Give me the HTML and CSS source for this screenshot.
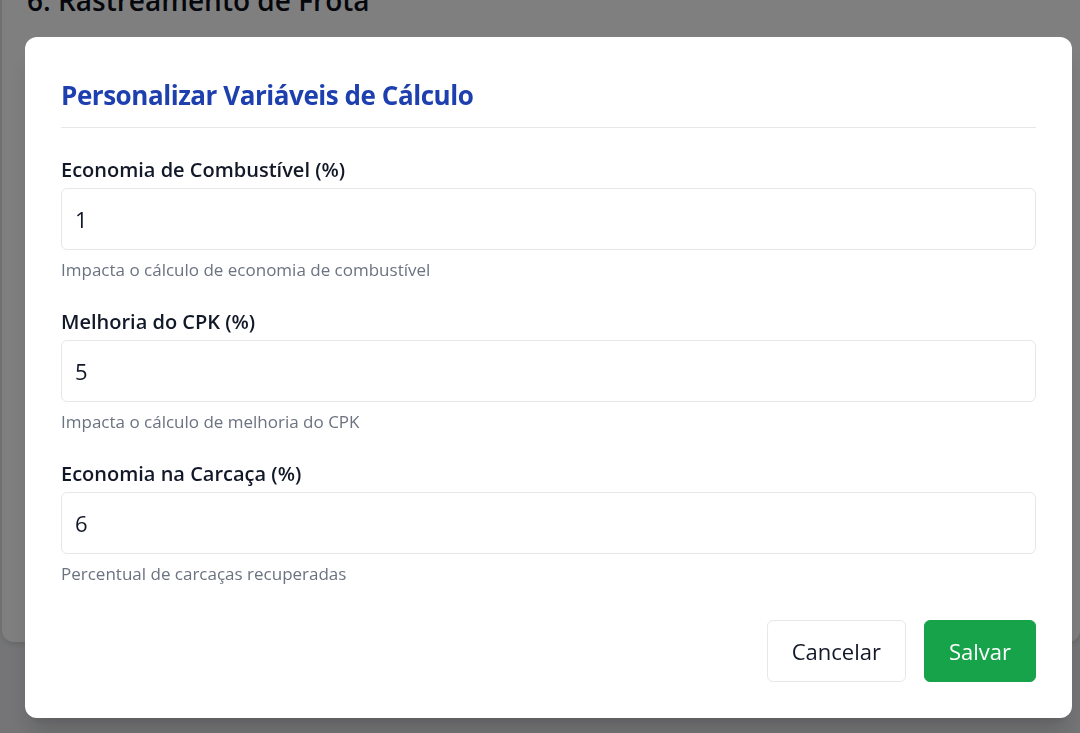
FILE: index.html
```html
<!DOCTYPE html>
<html lang="pt-BR">
<head>
<meta charset="utf-8">
<title>Personalizar Variáveis de Cálculo</title>
<link rel="stylesheet" href="styles.css">
</head>
<body>
<div class="page">
  <section class="card">
    <h2 class="section-title">6. Rastreamento de Frota</h2>
  </section>
</div>
<div class="overlay">
  <div class="modal" role="dialog" aria-labelledby="modal-title">
    <header class="modal-header">
      <h1 id="modal-title" class="modal-title">Personalizar Variáveis de Cálculo</h1>
    </header>
    <div class="field">
      <label class="field-label" for="f1">Economia de Combustível (%)</label>
      <input class="field-input" id="f1" type="text" value="1">
      <p class="field-help">Impacta o cálculo de economia de combustível</p>
    </div>
    <div class="field">
      <label class="field-label" for="f2">Melhoria do CPK (%)</label>
      <input class="field-input" id="f2" type="text" value="5">
      <p class="field-help">Impacta o cálculo de melhoria do CPK</p>
    </div>
    <div class="field">
      <label class="field-label" for="f3">Economia na Carcaça (%)</label>
      <input class="field-input" id="f3" type="text" value="6">
      <p class="field-help">Percentual de carcaças recuperadas</p>
    </div>
    <footer class="modal-footer">
      <button class="btn btn-secondary" type="button">Cancelar</button>
      <button class="btn btn-primary" type="button">Salvar</button>
    </footer>
  </div>
</div>
</body>
</html>
```
FILE: styles.css
```css
* { box-sizing: border-box; }
html, body { margin: 0; padding: 0; }
body {
  width: 1080px;
  height: 733px;
  overflow: hidden;
  background: #eaebee;
  font-family: "Open Sans", "Noto Sans", sans-serif;
  color: #111827;
}
.page {
  padding-left: 2px;
}
.card {
  background: #ffffff;
  height: 662px;
  margin-top: -20px;
  border-radius: 0 0 12px 12px;
  padding: 0 25px;
  box-shadow: 0 2px 6px rgba(0,0,0,0.12);
}
.section-title {
  margin: 0;
  padding-top: 0;
  font-size: 28px;
  line-height: 40px;
  font-weight: 600;
  color: #0b0f19;
}
.overlay {
  position: fixed;
  inset: 0;
  background: rgba(0, 0, 0, 0.5);
  display: flex;
  align-items: flex-start;
  padding: 37px 0 0 25px;
}
.modal {
  width: 1047px;
  height: 681px;
  background: #ffffff;
  border-radius: 12px;
  padding: 36px;
  box-shadow: 0 20px 25px -5px rgba(0,0,0,0.15), 0 8px 10px -6px rgba(0,0,0,0.1);
}
.modal-header {
  padding-top: 4px;
  padding-bottom: 14px;
  border-bottom: 1px solid #e5e7eb;
  margin-bottom: 28px;
}
.modal-title {
  margin: 0;
  font-size: 26px;
  line-height: 36px;
  font-weight: 700;
  letter-spacing: -0.45px;
  color: #1e40af;
}
.field {
  margin-bottom: 26px;
}
.field-label {
  display: block;
  font-size: 20px;
  line-height: 28px;
  font-weight: 600;
  color: #111827;
  margin-bottom: 4px;
}
.field-input {
  display: block;
  width: 100%;
  height: 62px;
  border: 1px solid #e5e7eb;
  border-radius: 6px;
  padding: 0 13px;
  font-family: inherit;
  font-size: 22px;
  color: #111827;
  background: #ffffff;
  outline: none;
}
.field-help {
  margin: 8px 0 0;
  font-size: 17px;
  line-height: 24px;
  color: #6b7280;
}
.modal-footer {
  display: flex;
  justify-content: flex-end;
  gap: 18px;
  margin-top: 34px;
}
.btn {
  height: 62px;
  border-radius: 6px;
  font-family: inherit;
  font-size: 22px;
  padding: 0 24px;
  cursor: pointer;
}
.btn-secondary {
  background: #ffffff;
  border: 1px solid #e5e7eb;
  color: #111827;
}
.btn-primary {
  background: #16a34a;
  border: 1px solid #16a34a;
  color: #ffffff;
}
```
